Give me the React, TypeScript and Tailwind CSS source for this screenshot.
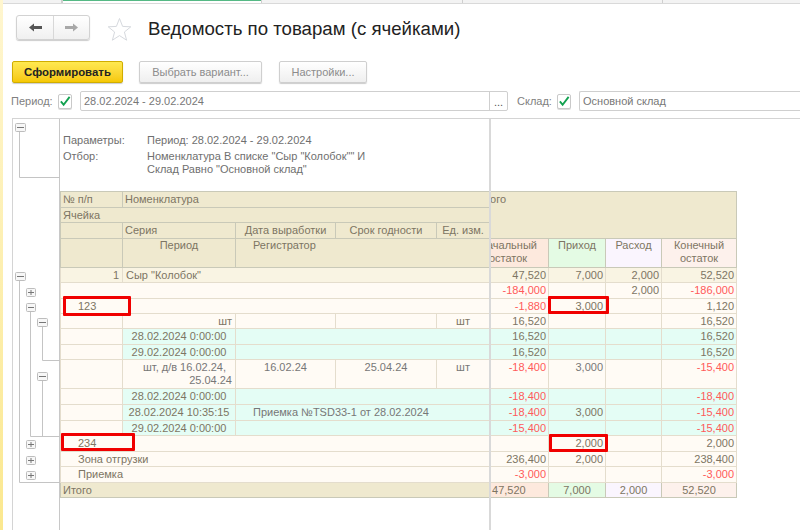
import React from 'react'

const font = { fontFamily: '"Liberation Sans", Arial, sans-serif' }

const Check = () => (
  <div className="w-[14px] h-[15px] border border-[#c9c9c9] rounded-[2px] bg-white flex items-center justify-center shadow-[0_1px_0_#ddd]">
    <svg width="13" height="12" viewBox="0 0 13 12">
      <path d="M2 6.5 L5 10 L11.5 1.5" fill="none" stroke="#12a150" strokeWidth="2" />
    </svg>
  </div>
)

const GrayButton = ({ className, children }: { className: string; children: React.ReactNode }) => (
  <div className={`h-[22px] flex items-center justify-center rounded-[2px] border border-[#cfcfcf] bg-linear-to-b from-white to-[#efefef] text-[#8c8c8c] shadow-[0_1px_1px_#ccc] ${className}`}>
    {children}
  </div>
)

const Outline = () => {
  const minus = [
    [15, 122, 10],
    [15, 271, 10],
    [26, 302, 9],
    [37, 317, 10],
    [37, 371, 10],
  ]
  const plus = [
    [26, 287],
    [26, 439],
    [26, 455],
    [26, 470],
  ]
  return (
    <svg width="47" height="412" viewBox="13 118 47 412" className="block">
      <g fill="none" stroke="#c4c4c4" strokeWidth="1">
        <path d="M19.5 130V176.5H60" />
        <path d="M19.5 279V481.5H60" />
        <path d="M30.5 310V435.5H60" />
        <path d="M42.5 326V359.5H60" />
        <path d="M42.5 379V435.5" />
      </g>
      {minus.map(([x, y, w]) => (
        <g key={y}>
          <rect x={x + 0.5} y={y + 0.5} width={w} height="8" rx="1" fill="#f7f7f7" stroke="#bdbdbd" />
          <path d={`M${x + 2} ${y + 4.5}H${x + w - 1}`} stroke="#777" />
        </g>
      ))}
      {plus.map(([x, y]) => (
        <g key={y}>
          <rect x={x + 0.5} y={y + 0.5} width="9" height="8" rx="1" fill="#f7f7f7" stroke="#bdbdbd" />
          <path d={`M${x + 2} ${y + 4.5}H${x + 8}M${x + 5} ${y + 2}V${y + 7}`} stroke="#777" />
        </g>
      ))}
    </svg>
  )
}

const hd = 'border border-[#c9c9b8] bg-[#efe9cf] px-[2px] pt-[1px] align-top overflow-hidden whitespace-nowrap'
const td = 'border border-[#e4ddcd] px-[3px] pt-[1px] align-top overflow-hidden'

const Num = ({ v, bg }: { v?: string; bg: string }) => (
  <td className={`${td} ${bg} !pr-[2px] text-right ${v && v[0] === '-' ? 'text-[#ff5a5a]' : ''}`}>{v}</td>
)

const Nums = ({ vals, bg }: { vals: string[]; bg: string }) => (
  <>
    {vals.map((v, i) => (
      <Num key={i} v={v} bg={bg} />
    ))}
  </>
)

const cream = 'bg-[#fffbf5]'
const teal = 'bg-[#e4fdf5]'

const DateRow = ({ h, date, reg, vals }: { h: string; date: string; reg?: string; vals: string[] }) => (
  <tr className={h}>
    <td className={`${td} ${cream}`}></td>
    <td className={`${td} ${teal} text-center whitespace-nowrap`}>{date}</td>
    <td colSpan={3} className={`${td} ${teal} pl-[17px] text-[#777]`}>{reg}</td>
    <Nums vals={vals} bg={teal} />
  </tr>
)

const GroupRow = ({ h, name, vals }: { h: string; name: string; vals: string[] }) => (
  <tr className={h}>
    <td colSpan={5} className={`${td} ${cream} pl-[17px]`}>{name}</td>
    <Nums vals={vals} bg={cream} />
  </tr>
)

const RedBox = ({ className }: { className: string }) => (
  <div className={`absolute border-[3px] border-[#f00000] rounded-[1px] ${className}`}></div>
)

export default function App() {
  return (
    <div style={font} className="relative w-[800px] h-[530px] overflow-hidden bg-white flex text-[11px] leading-[13px]">
      <div className="w-[3px] shrink-0 bg-linear-to-b from-[#fff6cf] to-[#fbe88f]"></div>

      <div className="flex-1 flex flex-col min-w-0">
        <div className="h-[4px] flex border-b border-[#d9d9d9] bg-[#f3f3f3]">
          <div className="w-[59px] border-r border-[#cfcfcf]"></div>
          <div className="w-[200px] border-x border-[#cfcfcf] bg-white">
            <div className="h-[1px] bg-[#55b985]"></div>
          </div>
          <div className="w-[201px] border-r border-[#cfcfcf]"></div>
          <div className="w-[200px] border-r border-[#cfcfcf]"></div>
        </div>

        <div className="h-[57px] pl-[13px] pt-[11px] flex items-start">
          <div className="w-[74px] h-[25px] flex rounded-[3px] border border-[#d2d2d2] bg-linear-to-b from-white to-[#f0f0f0] shadow-[0_1px_1px_#ccc]">
            <div className="w-[37px] border-r border-[#d8d8d8] flex items-center justify-center">
              <svg width="15" height="11" viewBox="0 0 15 11">
                <path d="M1 5.5 L6 1.5V4H14V7H6V9.5Z" fill="#555" />
              </svg>
            </div>
            <div className="flex-1 flex items-center justify-center">
              <svg width="15" height="11" viewBox="0 0 15 11">
                <path d="M14 5.5 L9 1.5V4H1V7H9V9.5Z" fill="#a8a8a8" />
              </svg>
            </div>
          </div>
          <svg width="25" height="25" viewBox="0 0 25 25" className="ml-[17px] mt-[2px]">
            <path d="M12.5 1.5 L15.6 9.4 L23.8 9.8 L17.4 15 L19.6 23.2 L12.5 18.6 L5.4 23.2 L7.6 15 L1.2 9.8 L9.4 9.4 Z" fill="#fff" stroke="#d6d9de" strokeWidth="1" />
          </svg>
          <h1 className="ml-[16px] mt-[2px] text-[18.65px] leading-[24px] text-[#222] whitespace-nowrap">Ведомость по товарам (с ячейками)</h1>
        </div>

        <div className="flex items-center pl-[9px] h-[22px]">
          <div className="w-[111px] h-[22px] flex items-center justify-center rounded-[2px] border border-[#d0ad00] bg-linear-to-b from-[#ffe94f] to-[#f6c800] font-bold text-[11.4px] text-[#222] shadow-[0_1px_1px_#ccc]">
            Сформировать
          </div>
          <GrayButton className="w-[123px] ml-[16px]">Выбрать вариант...</GrayButton>
          <GrayButton className="w-[88px] ml-[17px]">Настройки...</GrayButton>
        </div>

        <div className="flex items-center h-[20px] mt-[8px] pl-[8px] text-[#808080]">
          <span className="w-[47px]">Период:</span>
          <Check />
          <div className="ml-[8px] w-[428px] h-[20px] flex items-center border border-[#cfcfcf] rounded-[2px]">
            <span className="flex-1 pl-[3px] text-[#777]">28.02.2024 - 29.02.2024</span>
            <span className="w-[18px] h-full border-l border-[#cfcfcf] text-center text-[#555] leading-[20px]">...</span>
          </div>
          <span className="ml-[9px] w-[40px]">Склад:</span>
          <Check />
          <div className="ml-[8px] flex-1 h-[20px] flex items-center border border-[#cfcfcf] border-r-0 rounded-l-[2px] pl-[3px] text-[#777]">
            Основной склад
          </div>
        </div>

        <div className="relative flex-1 mt-[7px] ml-[9px] flex border-l border-t border-[#d4d4d4] min-h-0">
          <div className="w-[47px] shrink-0 border-r border-[#c8c8c8]">
            <Outline />
          </div>

          <div className="flex-1 min-w-0 text-[#7d7563]">
            <div className="h-[72px] pl-[3px] pt-[15px] text-[#6f6f6f]">
              <div className="flex">
                <span className="w-[84px]">Параметры:</span>
                <span>Период: 28.02.2024 - 29.02.2024</span>
              </div>
              <div className="flex mt-[3px]">
                <span className="w-[84px]">Отбор:</span>
                <span className="w-[240px]">
                  Номенклатура В списке "Сыр "Колобок"" И
                  <br />
                  Склад Равно "Основной склад"
                </span>
              </div>
            </div>

            <table className="table-fixed border-collapse w-[676px]">
              <colgroup>
                <col className="w-[62px]" />
                <col className="w-[113px]" />
                <col className="w-[100px]" />
                <col className="w-[101px]" />
                <col className="w-[53px]" />
                <col className="w-[59px]" />
                <col className="w-[57px]" />
                <col className="w-[56px]" />
                <col className="w-[75px]" />
              </colgroup>
              <tbody>
                <tr className="h-[16px]">
                  <td className={hd}>№ п/п</td>
                  <td colSpan={4} className={hd}>Номенклатура</td>
                  <td colSpan={4} rowSpan={3} className={hd}>
                    <div className="ml-[-2px]">ого</div>
                  </td>
                </tr>
                <tr className="h-[15px]">
                  <td colSpan={5} className={hd}>Ячейка</td>
                </tr>
                <tr className="h-[16px]">
                  <td className={hd}></td>
                  <td className={hd}>Серия</td>
                  <td className={`${hd} text-center`}>Дата выработки</td>
                  <td className={`${hd} text-center`}>Срок годности</td>
                  <td className={`${hd} text-center`}>Ед. изм.</td>
                </tr>
                <tr className="h-[29px]">
                  <td className={hd}></td>
                  <td className={`${hd} !pt-0 text-center`}>Период</td>
                  <td colSpan={3} className={`${hd} !pt-0 pl-[17px]`}>Регистратор</td>
                  <td className={`${hd} !pt-0 !bg-[#fde9dd] !px-0`}>
                    <div className="ml-[-24px] w-[84px] text-center">
                      Начальный
                      <br />
                      остаток
                    </div>
                  </td>
                  <td className={`${hd} !pt-0 !bg-[#e4fbe4] text-center`}>Приход</td>
                  <td className={`${hd} !pt-0 !bg-[#faf5fe] text-center`}>Расход</td>
                  <td className={`${hd} !pt-0 !bg-[#fdf1ec] text-center`}>
                    Конечный
                    <br />
                    остаток
                  </td>
                </tr>

                <tr className="h-[15px]">
                  <td className={`${td} bg-[#f9f4e3] text-right`}>1</td>
                  <td colSpan={4} className={`${td} bg-[#f9f4e3]`}>Сыр "Колобок"</td>
                  <Nums vals={['47,520', '7,000', '2,000', '52,520']} bg="bg-[#f9f4e3]" />
                </tr>
                <GroupRow h="h-[16px]" name="" vals={['-184,000', '', '2,000', '-186,000']} />
                <GroupRow h="h-[15px]" name="123" vals={['-1,880', '3,000', '', '1,120']} />
                <tr className="h-[15px]">
                  <td className={`${td} ${cream}`}></td>
                  <td className={`${td} ${cream} text-right`}>шт</td>
                  <td className={`${td} ${cream}`}></td>
                  <td className={`${td} ${cream}`}></td>
                  <td className={`${td} ${cream} text-center`}>шт</td>
                  <Nums vals={['16,520', '', '', '16,520']} bg={cream} />
                </tr>
                <DateRow h="h-[16px]" date="28.02.2024 0:00:00" vals={['16,520', '', '', '16,520']} />
                <DateRow h="h-[15px]" date="29.02.2024 0:00:00" vals={['16,520', '', '', '16,520']} />
                <tr className="h-[29px] text-[#777]">
                  <td className={`${td} ${cream}`}></td>
                  <td className={`${td} ${cream} text-right whitespace-nowrap`}>
                    <span className="pr-[6px]">шт, д/в 16.02.24,</span>
                    <br />
                    25.04.24
                  </td>
                  <td className={`${td} ${cream} text-center`}>16.02.24</td>
                  <td className={`${td} ${cream} text-center`}>25.04.24</td>
                  <td className={`${td} ${cream} text-center`}>шт</td>
                  <Nums vals={['-18,400', '3,000', '', '-15,400']} bg={cream} />
                </tr>
                <DateRow h="h-[16px]" date="28.02.2024 0:00:00" vals={['-18,400', '', '', '-18,400']} />
                <DateRow h="h-[16px]" date="28.02.2024 10:35:15" reg="Приемка №TSD33-1 от 28.02.2024" vals={['-18,400', '3,000', '', '-15,400']} />
                <DateRow h="h-[15px]" date="29.02.2024 0:00:00" vals={['-15,400', '', '', '-15,400']} />
                <GroupRow h="h-[16px]" name="234" vals={['', '2,000', '', '2,000']} />
                <GroupRow h="h-[15px]" name="Зона отгрузки" vals={['236,400', '2,000', '', '238,400']} />
                <GroupRow h="h-[16px]" name="Приемка" vals={['-3,000', '', '', '-3,000']} />
                <tr className="h-[15px]">
                  <td colSpan={5} className={hd}>Итого</td>
                  <td className={`${hd} !bg-[#fde9dd]`}>47,520</td>
                  <td className={`${hd} !bg-[#e4fbe4] text-center`}>7,000</td>
                  <td className={`${hd} !bg-[#faf5fe] text-center`}>2,000</td>
                  <td className={`${hd} !bg-[#fdf1ec] text-center`}>52,520</td>
                </tr>
              </tbody>
            </table>
          </div>

          <div className="absolute left-[476px] top-0 bottom-0 w-[2px] bg-[#d9d9d9]"></div>
          <RedBox className="left-[50px] top-[177px] w-[68px] h-[20px]" />
          <RedBox className="left-[48px] top-[314px] w-[74px] h-[18px]" />
          <RedBox className="left-[535px] top-[177px] w-[61px] h-[18px]" />
          <RedBox className="left-[536px] top-[315px] w-[59px] h-[18px]" />
        </div>
      </div>
    </div>
  )
}
